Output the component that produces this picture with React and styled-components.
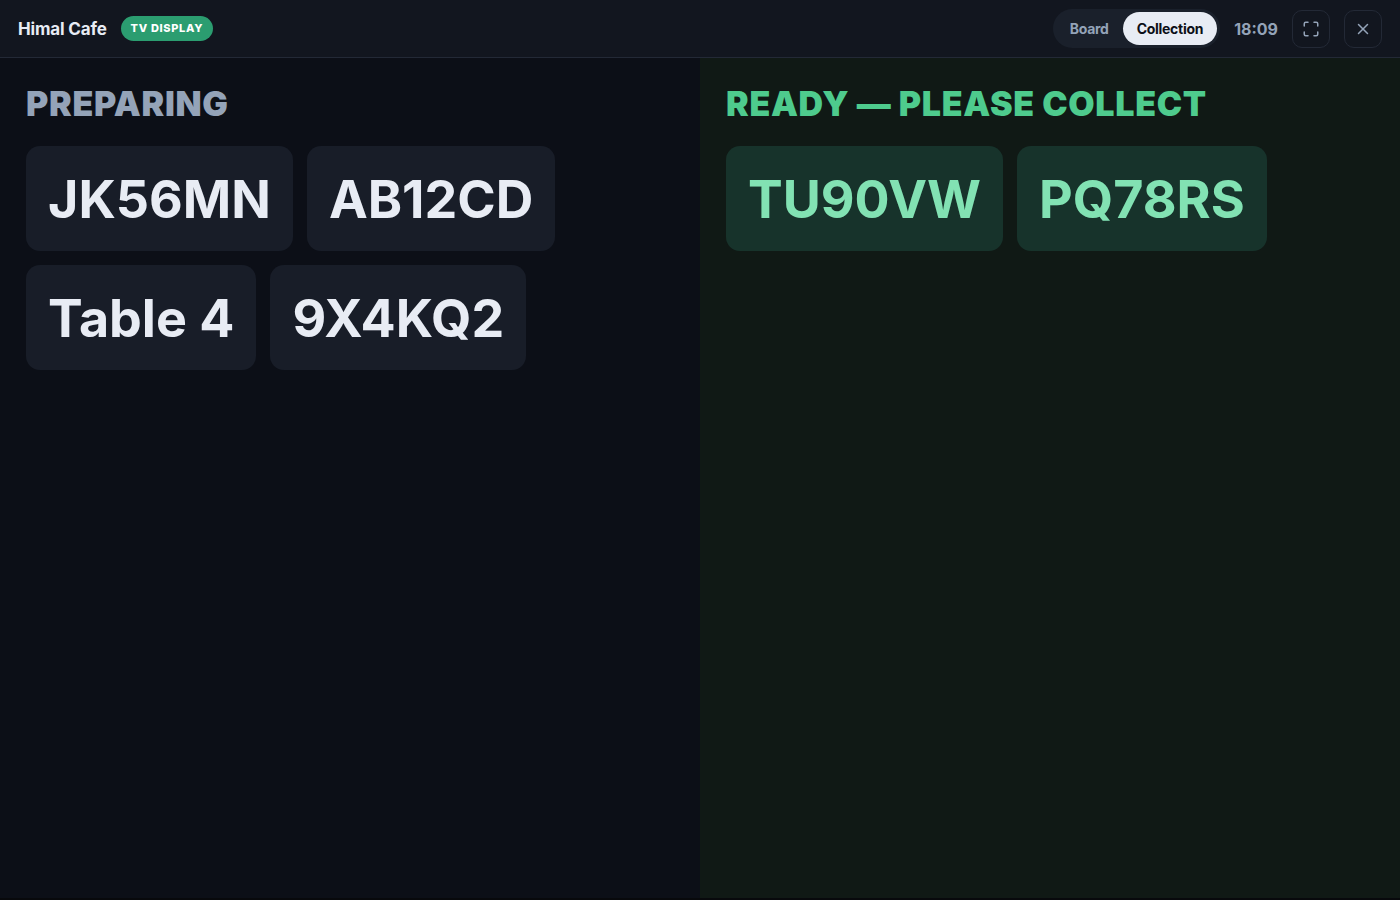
import React, { useState } from "react";
import styled, { createGlobalStyle } from "styled-components";
import { Maximize, X } from "lucide-react";

const GlobalStyle = createGlobalStyle`
  *, *::before, *::after { box-sizing: border-box; }
  body { margin: 0; background: #08090c; color: #e8ecf4; font-family: Inter, "Liberation Sans", sans-serif; }
  button { font-family: inherit; cursor: pointer; }
`;

const Screen = styled.div`
  display: flex;
  flex-direction: column;
  min-height: 100vh;
  padding-bottom: 2px;
`;

const TopBar = styled.header`
  display: flex;
  align-items: center;
  justify-content: space-between;
  padding: 9px 18px;
  background: #12161f;
  border-bottom: 1px solid #232936;
`;

const Group = styled.div`
  display: flex;
  align-items: center;
  gap: 14px;
`;

const Name = styled.h1`
  margin: 0;
  font-size: 17px;
  line-height: 24px;
  font-weight: 700;
  letter-spacing: -0.01em;
`;

const Badge = styled.span`
  padding: 4px 10px;
  border-radius: 999px;
  background: #2b9d70;
  color: #fff;
  font-size: 11px;
  line-height: 17px;
  font-weight: 800;
  letter-spacing: 0.06em;
`;

const Switcher = styled.nav`
  display: flex;
  padding: 3px;
  border-radius: 999px;
  background: #1a202b;
`;

const Tab = styled.button`
  padding: 6px 14px;
  border: 0;
  border-radius: 999px;
  background: ${(p) => (p.$active ? "#e8ecf4" : "transparent")};
  color: ${(p) => (p.$active ? "#0c0f17" : "#94a3b8")};
  font-size: 14px;
  line-height: 21px;
  font-weight: 700;
  letter-spacing: -0.02em;
`;

const Clock = styled.time`
  color: #94a3b8;
  font-size: 16px;
  line-height: 24px;
  font-weight: 700;
`;

const IconButton = styled.button`
  display: grid;
  place-items: center;
  width: 38px;
  height: 38px;
  padding: 0;
  border: 1px solid #232936;
  border-radius: 10px;
  background: transparent;
  color: #94a3b8;
`;

const Columns = styled.main`
  flex: 1;
  display: grid;
  grid-template-columns: 1fr 1fr;
`;

const Column = styled.section`
  padding: 26px;
  background: ${(p) => (p.$ready ? "#101915" : "#0c0f17")};
`;

const Heading = styled.h2`
  margin: 0 0 22px;
  color: ${(p) => (p.$ready ? "#4ecb8d" : "#94a3b8")};
  font-size: 34px;
  line-height: 40px;
  font-weight: 900;
  letter-spacing: 0.02em;
  text-transform: uppercase;
`;

const Tickets = styled.ul`
  display: flex;
  flex-wrap: wrap;
  gap: 14px;
  margin: 0;
  padding: 0;
  list-style: none;
`;

const Ticket = styled.li`
  padding: 21px 22px 19px;
  border-radius: 14px;
  background: ${(p) => (p.$ready ? "#17332b" : "#181d28")};
  color: ${(p) => (p.$ready ? "#82e2b3" : "#e8ecf4")};
  font-size: 52px;
  line-height: 65px;
  font-weight: 700;
`;

const preparing = ["JK56MN", "AB12CD", "Table 4", "9X4KQ2"];
const ready = ["TU90VW", "PQ78RS"];

function OrderColumn({ title, orders, isReady }) {
  return (
    <Column $ready={isReady}>
      <Heading $ready={isReady}>{title}</Heading>
      <Tickets>
        {orders.map((order) => (
          <Ticket key={order} $ready={isReady}>{order}</Ticket>
        ))}
      </Tickets>
    </Column>
  );
}

export default function App() {
  const [view, setView] = useState("Collection");
  return (
    <Screen>
      <GlobalStyle />
      <TopBar>
        <Group>
          <Name>Himal Cafe</Name>
          <Badge>TV DISPLAY</Badge>
        </Group>
        <Group>
          <Switcher aria-label="View">
            {["Board", "Collection"].map((name) => (
              <Tab key={name} type="button" $active={view === name} aria-pressed={view === name} onClick={() => setView(name)}>
                {name}
              </Tab>
            ))}
          </Switcher>
          <Clock>18:09</Clock>
          <IconButton type="button" aria-label="Full screen"><Maximize size={18} strokeWidth={2} /></IconButton>
          <IconButton type="button" aria-label="Close"><X size={18} strokeWidth={2} /></IconButton>
        </Group>
      </TopBar>
      <Columns>
        <OrderColumn title="Preparing" orders={preparing} />
        <OrderColumn title="Ready — please collect" orders={ready} isReady />
      </Columns>
    </Screen>
  );
}
